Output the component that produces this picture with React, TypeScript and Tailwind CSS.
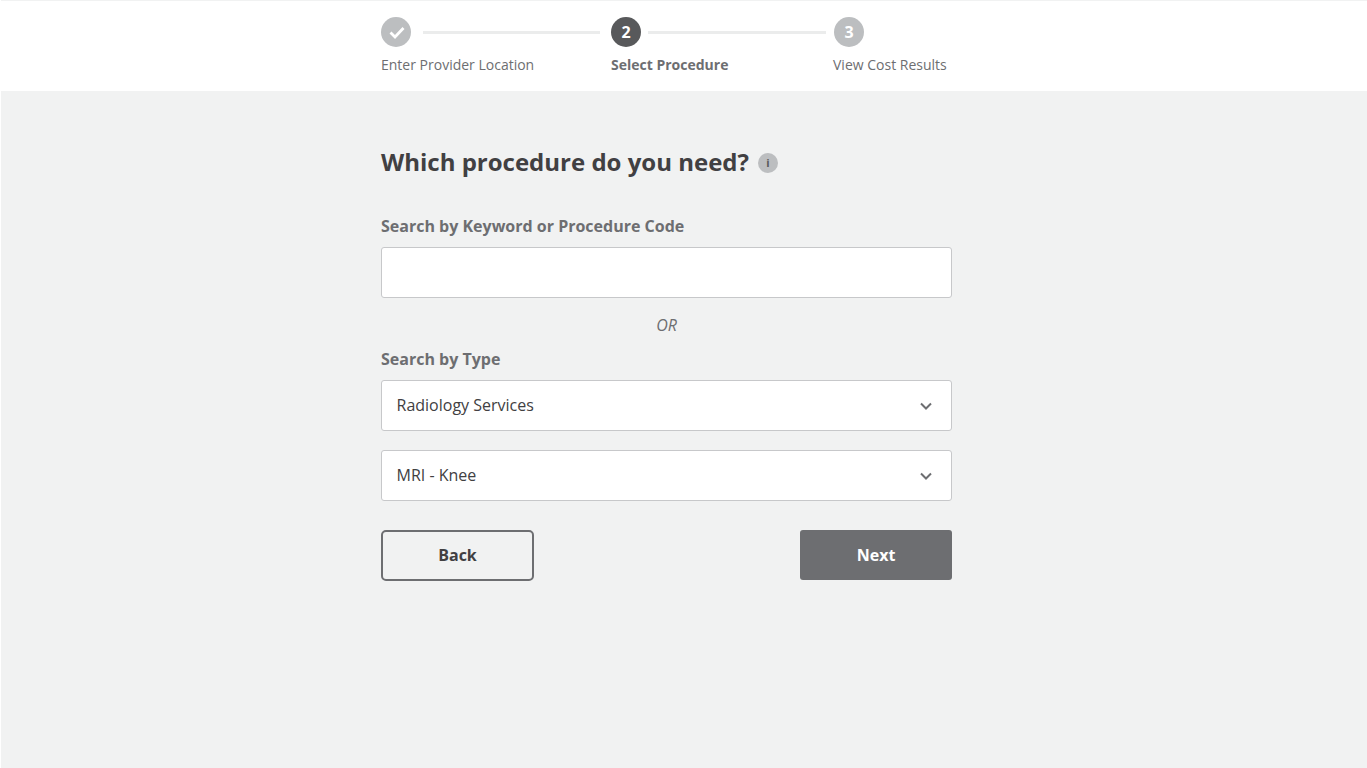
import React from "react";

const font = { fontFamily: '"Open Sans", sans-serif' };

function Chevron() {
  return (
    <svg width="12" height="8" viewBox="0 0 12 8" fill="none" className="absolute right-[19px] top-[21px]">
      <path d="M1 1.5 L6 6.5 L11 1.5" stroke="#6d6e71" strokeWidth="2" />
    </svg>
  );
}

function Select({ value }: { value: string }) {
  return (
    <div className="relative flex h-[51px] items-center rounded-[3px] border border-[#c7c8ca] bg-white pb-[2px] pl-[14.5px] text-[16px] text-[#414042]">
      {value}
      <Chevron />
    </div>
  );
}

export default function App() {
  return (
    <div style={font} className="min-h-[768px] bg-white pl-px">
      <div className="flex min-h-[768px] flex-col bg-[#f1f2f2]">
        <header className="h-[91px] border-t border-[#f1f2f2] bg-white">
          <div className="ml-[380px] flex w-[571px] pt-[16px] text-[14px] leading-[20px]">
            <div className="w-[230px]">
              <div className="flex items-center">
                <div className="flex h-[30px] w-[30px] items-center justify-center rounded-full bg-[#bcbec0] pl-[2px]">
                  <svg width="16" height="13" viewBox="0 0 16 13" fill="none">
                    <path d="M1.5 6.5 L6 11 L14.5 2" stroke="#fff" strokeWidth="2.8" />
                  </svg>
                </div>
                <div className="ml-[12px] h-[3px] w-[177px] bg-[#ebecec]" />
              </div>
              <div className="mt-[8px] text-[#6d6e71]">Enter Provider Location</div>
            </div>
            <div className="w-[222px]">
              <div className="flex items-center">
                <div className="flex h-[30px] w-[30px] items-center justify-center rounded-full bg-[#58595b] text-[16px] font-bold text-white">2</div>
                <div className="ml-[7px] h-[3px] w-[178px] bg-[#ebecec]" />
              </div>
              <div className="mt-[8px] font-bold text-[#6d6e71]">Select Procedure</div>
            </div>
            <div>
              <div className="ml-px flex h-[30px] w-[30px] items-center justify-center rounded-full bg-[#bcbec0] text-[16px] font-bold text-white">3</div>
              <div className="mt-[8px] text-[#6d6e71]">View Cost Results</div>
            </div>
          </div>
        </header>
        <main className="ml-[380px] w-[571px] pt-[52px]">
          <div className="flex h-[38px] items-center">
            <h1 className="text-[24px] font-bold leading-[38px] text-[#414042]">Which procedure do you need?</h1>
            <div className="ml-[9px] mt-[2px] flex h-[20px] w-[20px] items-center justify-center rounded-full bg-[#bcbec0] text-[11px] font-bold text-[#58595b]">i</div>
          </div>
          <label className="mt-[34px] block text-[16px] font-bold leading-[22px] text-[#6d6e71]">Search by Keyword or Procedure Code</label>
          <div className="mt-[10px] h-[51px] rounded-[3px] border border-[#c7c8ca] bg-white" />
          <div className="mt-[16px] text-center text-[16px] italic leading-[22px] text-[#6d6e71]">OR</div>
          <label className="mt-[12px] block text-[16px] font-bold leading-[22px] text-[#6d6e71]">Search by Type</label>
          <div className="mt-[10px]">
            <Select value="Radiology Services" />
          </div>
          <div className="mt-[19px]">
            <Select value="MRI - Knee" />
          </div>
          <div className="mt-[29px] flex items-start justify-between">
            <button className="h-[51px] w-[153px] rounded-[5px] border-2 border-[#6d6e71] pb-[2px] text-[16px] font-bold text-[#414042]">Back</button>
            <button className="h-[50px] w-[152px] rounded-[3px] bg-[#6d6e71] text-[16px] font-bold text-white">Next</button>
          </div>
        </main>
      </div>
    </div>
  );
}
